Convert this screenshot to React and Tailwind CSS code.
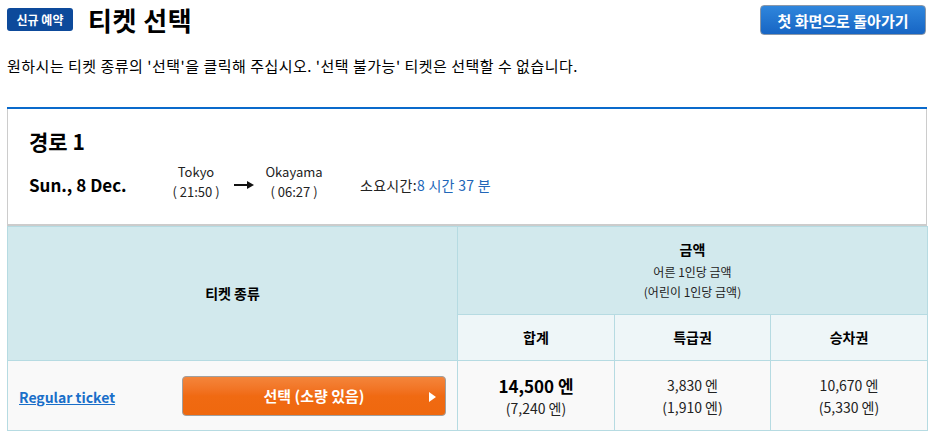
import React from "react";

export default function App() {
  const font = { fontFamily: '"Noto Sans CJK KR", "Noto Sans", sans-serif' };
  return (
    <div style={font} className="w-[936px] h-[437px] bg-white overflow-hidden text-[#111]">
      {/* header */}
      <div className="flex items-start justify-between pl-[7px] pr-[10px] pt-[5px]">
        <div className="flex items-center gap-[15px] pt-[3px]">
          <span className="bg-[#0d4a9b] text-white text-[12px] font-bold rounded-[3px] w-[66px] h-[23px] flex items-center justify-center leading-none">신규 예약</span>
          <h1 className="text-[26px] font-bold leading-[23px] text-black tracking-[0.5px]">티켓 선택</h1>
        </div>
        <button className="w-[166px] h-[30px] rounded-[4px] border border-[#8a97a8] bg-gradient-to-b from-[#2f86dc] to-[#1765c4] text-white text-[15px] font-bold leading-none flex items-center justify-center">첫 화면으로 돌아가기</button>
      </div>
      <p className="pl-[7px] mt-[21px] text-[15px] leading-[20px] text-black tracking-[0.5px]">원하시는 티켓 종류의 '선택'을 클릭해 주십시오. '선택 불가능' 티켓은 선택할 수 없습니다.</p>

      {/* card */}
      <div className="mx-[7px] mt-[31px] w-[920px] border-t-2 border-[#0a6acb]">
        <div className="border-l border-r border-b-2 border-l-[#cccccc] border-r-[#cccccc] border-b-[#cccccc] h-[117px] pl-[21px] pt-[18px]">
          <div className="text-[21px] font-bold leading-[28px] text-black">경로 1</div>
          <div className="flex items-center mt-[7px]">
            <div className="w-[129px] text-[17px] font-bold text-black leading-[24px] pt-[6px]">Sun., 8 Dec.</div>
            <div className="w-[76px] text-center text-[13px] leading-[20px] text-[#222]">
              <div>Tokyo</div>
              <div>( 21:50 )</div>
            </div>
            <svg width="20" height="8" viewBox="0 0 20 8" className="mt-[6px]">
              <path d="M0 4 H14" stroke="#111" strokeWidth="2" />
              <path d="M13 0 L20 4 L13 8 Z" fill="#111" />
            </svg>
            <div className="w-[80px] text-center text-[13px] leading-[20px] text-[#222]">
              <div>Okayama</div>
              <div>( 06:27 )</div>
            </div>
            <div className="ml-[26px] text-[14px] leading-[20px] text-[#222] pt-[5px] tracking-[0.3px]">
              소요시간:<span className="text-[#2166b8]">8 시간 37 분</span>
            </div>
          </div>
        </div>

        {/* table */}
        <table className="w-[920px] border-collapse table-fixed text-[#222]">
          <colgroup>
            <col className="w-[450px]" />
            <col className="w-[157px]" />
            <col className="w-[156px]" />
            <col className="w-[157px]" />
          </colgroup>
          <tbody>
            <tr className="h-[88px]">
              <th rowSpan={2} className="bg-[#d2e9ed] border border-[#b6dbe2] text-[14px] font-bold text-black">티켓 종류</th>
              <th colSpan={3} className="bg-[#d2e9ed] border border-[#b6dbe2] font-normal">
                <div className="text-[14px] font-bold leading-[20px] text-black">금액</div>
                <div className="text-[12px] leading-[20px] mt-[3px]">어른 1인당 금액</div>
                <div className="text-[12px] leading-[20px]">(어린이 1인당 금액)</div>
              </th>
            </tr>
            <tr className="h-[46px]">
              <th className="bg-[#eef6f8] border border-[#b6dbe2] text-[14px] font-bold text-black">합계</th>
              <th className="bg-[#eef6f8] border border-[#b6dbe2] text-[14px] font-bold text-black">특급권</th>
              <th className="bg-[#eef6f8] border border-[#b6dbe2] text-[14px] font-bold text-black">승차권</th>
            </tr>
            <tr className="h-[70px]">
              <td className="bg-[#f9f9f9] border border-[#b6dbe2] px-[11px]">
                <div className="flex items-center justify-between">
                  <a href="#" className="text-[14px] font-semibold text-[#1a6fc9] underline leading-[20px] mt-[3px]">Regular ticket</a>
                  <button className="relative w-[264px] h-[40px] rounded-[4px] border border-[#a0a0a0] bg-gradient-to-b from-[#f4853a] via-[#f06a12] to-[#ef680e] text-white text-[15px] font-bold leading-none flex items-center justify-center">
                    선택 (소량 있음)
                    <svg width="7" height="10" viewBox="0 0 7 10" className="absolute right-[9px] top-[15px]">
                      <path d="M0 0 L7 5 L0 10 Z" fill="#fff" />
                    </svg>
                  </button>
                </div>
              </td>
              <td className="bg-[#f9f9f9] border border-[#b6dbe2] text-center">
                <div className="text-[17px] font-bold leading-[24px] text-black">14,500 엔</div>
                <div className="text-[14px] leading-[20px]">(7,240 엔)</div>
              </td>
              <td className="bg-[#f9f9f9] border border-[#b6dbe2] text-center">
                <div className="text-[14px] leading-[22px]">3,830 엔</div>
                <div className="text-[14px] leading-[22px]">(1,910 엔)</div>
              </td>
              <td className="bg-[#f9f9f9] border border-[#b6dbe2] text-center">
                <div className="text-[14px] leading-[22px]">10,670 엔</div>
                <div className="text-[14px] leading-[22px]">(5,330 엔)</div>
              </td>
            </tr>
          </tbody>
        </table>
      </div>
    </div>
  );
}
